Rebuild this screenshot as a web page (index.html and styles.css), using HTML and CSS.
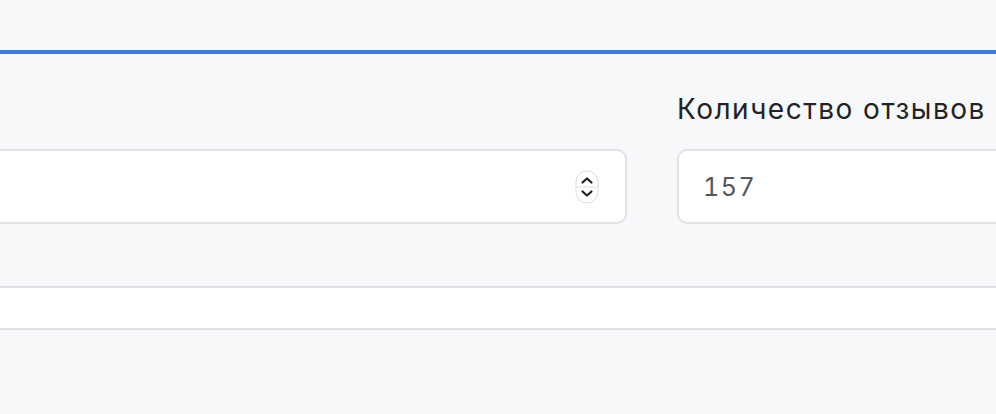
FILE: index.html
```html
<!DOCTYPE html>
<html lang="ru">
<head>
<meta charset="utf-8">
<link rel="stylesheet" href="styles.css">
</head>
<body>
<div class="page">
  <div class="topbar"></div>
  <div class="accent"></div>
  <div class="form-row">
    <div class="field field-left">
      <div class="label">&nbsp;</div>
      <div class="input">
        <span class="value"></span>
        <span class="spinner">
          <svg width="24" height="34" viewBox="0 0 24 34">
            <rect x="1" y="1" width="22" height="32" rx="11" fill="#fff" stroke="#dcdde0" stroke-width="1"/>
            <line x1="1" y1="17" x2="23" y2="17" stroke="#dcdde0" stroke-width="1"/>
            <path d="M7.5 12.5 L12 8.5 L16.5 12.5" fill="none" stroke="#222" stroke-width="2.2" stroke-linecap="round" stroke-linejoin="round"/>
            <path d="M7.5 21.5 L12 25.5 L16.5 21.5" fill="none" stroke="#222" stroke-width="2.2" stroke-linecap="round" stroke-linejoin="round"/>
          </svg>
        </span>
      </div>
    </div>
    <div class="field field-right">
      <div class="label">Количество отзывов</div>
      <div class="input">
        <span class="value">157</span>
      </div>
    </div>
  </div>
  <div class="strip"></div>
</div>
</body>
</html>
```

FILE: styles.css
```css
html, body {
  margin: 0;
  padding: 0;
  background: #f7f8fa;
  overflow: hidden;
}
body {
  width: 996px;
  height: 414px;
  font-family: Inter, "DejaVu Sans", sans-serif;
}
.page {
  display: flex;
  flex-direction: column;
}
.topbar {
  height: 50px;
}
.accent {
  height: 4px;
  background: #3b7bed;
}
.form-row {
  display: grid;
  grid-template-columns: 647px 400px;
  column-gap: 50px;
  margin-left: -20px;
  margin-top: 35px;
}
.field {
  display: flex;
  flex-direction: column;
}
.label {
  font-size: 28px;
  line-height: 40px;
  height: 40px;
  letter-spacing: 1.5px;
  color: #222326;
  margin-bottom: 20px;
  white-space: nowrap;
}
.input {
  box-sizing: border-box;
  height: 75px;
  background: #fff;
  border: 2px solid #dfe1e5;
  border-radius: 10px;
  display: flex;
  align-items: center;
  padding: 0 26px 0 24px;
}
.value {
  flex: 1;
  font-size: 25px;
  letter-spacing: 1.5px;
  font-variant-numeric: tabular-nums;
  color: #55575b;
}
.spinner {
  display: flex;
  width: 24px;
  height: 34px;
}
.strip {
  margin-top: 62px;
  height: 40px;
  background: #fff;
  border-top: 2px solid #dfe1e5;
  border-bottom: 2px solid #dfe1e5;
}
```
